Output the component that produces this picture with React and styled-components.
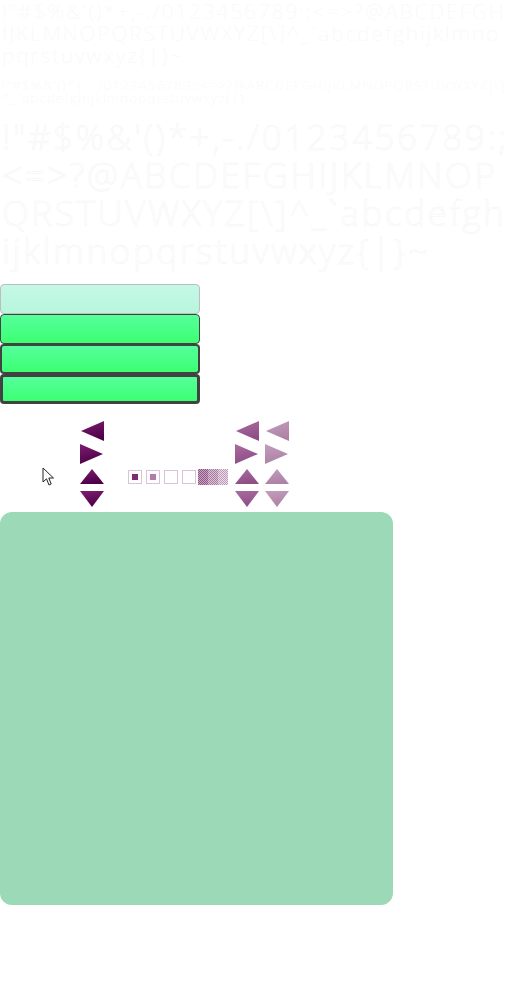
import React from 'react';
import styled, { createGlobalStyle } from 'styled-components';

const Global = createGlobalStyle`
    html, body {
        margin: 0;
        background: #ffffff;
    }
`;

const CHARS = "!\"#$%&'()*+,-./0123456789:;<=>?@ABCDEFGHIJKLMNOPQRSTUVWXYZ[\\]^_`abcdefghijklmnopqrstuvwxyz{|}~";

const Page = styled.div`
    width: 512px;
    display: flex;
    flex-direction: column;
    font-family: "Open Sans", "Noto Sans", sans-serif;
`;

const Specimen = styled.p`
    margin: 0;
    margin-top: ${p => p.$top || 0}px;
    padding: 0 2px;
    font-size: ${p => p.$size}px;
    line-height: ${p => p.$line}px;
    font-weight: 300;
    color: ${p => p.$color || '#fafafa'};
    word-break: break-all;
    letter-spacing: ${p => p.$spacing || 0}px;
    -webkit-text-stroke: ${p => p.$stroke ? '0.5px #f4f4f4' : '0'};
`;

const Buttons = styled.div`
    display: flex;
    flex-direction: column;
    width: 200px;
    margin-top: 14px;
`;

const Button = styled.div`
    box-sizing: border-box;
    height: 30px;
    border-radius: 4px;
    border: ${p => p.$border}px solid ${p => p.$light ? '#bdbdbd' : '#424242'};
    background: ${p => p.$light
        ? 'linear-gradient(#c4f9e7, #b8f5dc)'
        : 'linear-gradient(#55ff9c, #3cff72)'};
`;

const Controls = styled.div`
    display: grid;
    grid-template-columns: 55px 25px 24px 24px 100px 7px 24px 6px 24px;
    grid-template-rows: repeat(4, 23px);
    margin-top: 15px;
`;

const Cell = styled.div`
    grid-column: ${p => p.$col};
    grid-row: ${p => p.$row};
    display: flex;
    align-items: center;
    justify-content: ${p => p.$justify || 'center'};
`;

const Squares = styled.div`
    display: flex;
    align-items: center;
    gap: 4px;
`;

const Box = styled.div`
    box-sizing: border-box;
    width: 14px;
    height: 14px;
    border: 1px solid #dcc2d8;
    background: #fff;
    display: flex;
    align-items: center;
    justify-content: center;
    &::after {
        content: '';
        width: 6px;
        height: 6px;
        background: ${p => p.$fill || 'transparent'};
    }
`;

const Checker = styled.div`
    display: flex;
    margin-left: -2px;
`;

const CheckPiece = styled.div`
    width: 10px;
    height: 16px;
    background-color: ${p => p.$bg};
    background-image:
        linear-gradient(45deg, ${p => p.$fg} 25%, transparent 25%, transparent 75%, ${p => p.$fg} 75%),
        linear-gradient(45deg, ${p => p.$fg} 25%, transparent 25%, transparent 75%, ${p => p.$fg} 75%);
    background-size: 2px 2px;
    background-position: 0 0, 1px 1px;
`;

const Panel = styled.div`
    width: 393px;
    height: 393px;
    margin-top: 1px;
    border-radius: 12px;
    background: #9bd9b7;
`;

const shades = {
    dark: ['#7e1f70', '#4e0048'],
    mid: ['#a96ca0', '#8e4f86'],
    light: ['#c39ebd', '#ad82a6'],
};

const Arrow = ({ dir, tone }) => {
    const [a, b] = shades[tone];
    const id = `g-${dir}-${tone}`;
    const pts = {
        left: '1,11 24,1 24,21',
        right: '0,1 23,11 0,21',
        up: '12,1 24,16 0,16',
        down: '0,0 24,0 12,16',
    }[dir];
    const h = dir === 'up' || dir === 'down' ? 17 : 22;
    return (
        <svg width="24" height={h} viewBox={`0 0 24 ${h}`}>
            <defs>
                <linearGradient id={id} x1="0" y1="0" x2="0.3" y2="1">
                    <stop offset="0" stopColor={a} />
                    <stop offset="1" stopColor={b} />
                </linearGradient>
            </defs>
            <polygon points={pts} fill={`url(#${id})`} />
        </svg>
    );
};

const Cursor = () => (
    <svg width="13" height="20" viewBox="0 0 13 20">
        <path d="M1 1 L1 15 L4.5 11.8 L7 18 L9.2 17 L6.8 11 L11.5 11 Z"
            fill="#fff" stroke="#222" strokeWidth="1" strokeLinejoin="round" />
    </svg>
);

const arrowRows = [['left', 1], ['right', 2], ['up', 3], ['down', 4]];

export default function App() {
    return (
        <Page>
            <Global />
            <Specimen $size={21} $line={22} $spacing={1.8}>{CHARS}</Specimen>
            <Specimen $size={13.5} $line={13} $top={13} $spacing={1.1}>{CHARS}</Specimen>
            <Specimen $size={35} $line={38} $top={13} $spacing={2.6} $color="#ffffff" $stroke>{CHARS}</Specimen>
            <Buttons>
                <Button $light $border={1} />
                <Button $border={1} />
                <Button $border={2} />
                <Button $border={3} />
            </Buttons>
            <Controls>
                <Cell $col={1} $row={3} $justify="flex-end"><Cursor /></Cell>
                {arrowRows.map(([d, r]) => (
                    <Cell key={'a' + d} $col={3} $row={r}><Arrow dir={d} tone="dark" /></Cell>
                ))}
                <Cell $col={5} $row={3} $justify="flex-start">
                    <Squares>
                        <Box $fill="#7b2c72" />
                        <Box $fill="#b27ca9" />
                        <Box />
                        <Box />
                        <Checker>
                            <CheckPiece $bg="#c9a5c4" $fg="#8e5686" />
                            <CheckPiece $bg="#dcc3d8" $fg="#a77a9f" />
                            <CheckPiece $bg="#ead9e7" $fg="#bf9cb9" />
                        </Checker>
                    </Squares>
                </Cell>
                {arrowRows.map(([d, r]) => (
                    <Cell key={'m' + d} $col={7} $row={r}><Arrow dir={d} tone="mid" /></Cell>
                ))}
                {arrowRows.map(([d, r]) => (
                    <Cell key={'l' + d} $col={9} $row={r}><Arrow dir={d} tone="light" /></Cell>
                ))}
            </Controls>
            <Panel />
        </Page>
    );
}
